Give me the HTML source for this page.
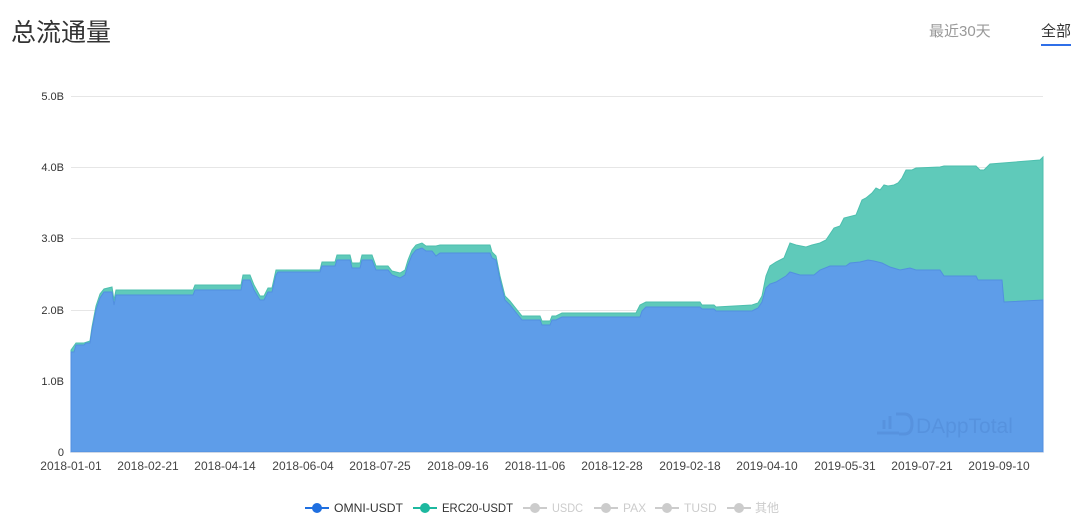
<!DOCTYPE html>
<html><head><meta charset="utf-8"><style>
body{margin:0;width:1080px;height:527px;background:#fff;overflow:hidden;font-family:"Liberation Sans","Noto Sans CJK SC",sans-serif;position:relative}
.t{position:absolute;left:11px;top:13px;font-size:25px;color:#333}
.tab{position:absolute;top:20px;font-size:15px}
</style></head><body>
<div class="t">总流通量</div>
<div class="tab" style="left:929px;color:#999">最近30天</div>
<div class="tab" style="left:1041px;color:#333">全部</div>
<div style="position:absolute;left:1041px;top:44px;width:30px;height:2px;background:#2f6fe8"></div>
<svg width="1080" height="527" style="position:absolute;left:0;top:0" font-family="Liberation Sans, sans-serif">
<g stroke="#e6e6e6" stroke-width="1">
<line x1="71" x2="1043" y1="96.5" y2="96.5"/><line x1="71" x2="1043" y1="167.5" y2="167.5"/>
<line x1="71" x2="1043" y1="238.5" y2="238.5"/><line x1="71" x2="1043" y1="310.5" y2="310.5"/>
<line x1="71" x2="1043" y1="381.5" y2="381.5"/>
</g>
<g font-size="11" fill="#333" text-anchor="end">
<text x="64" y="100">5.0B</text><text x="64" y="171">4.0B</text><text x="64" y="242">3.0B</text>
<text x="64" y="314">2.0B</text><text x="64" y="385">1.0B</text><text x="64" y="456">0</text>
</g>
<path fill="#5fcaba" stroke="#4dbfae" d="M71,452 L71,350 L76,343 L84,343 L90,341 L92,327 L96,306 L100,294 L104,289 L112,287 L114,300 L116,290 L193,290 L195,285 L241,285 L243,275 L250,275 L254,285 L260,296 L264,296 L268,288 L272,288 L276,270 L320,270 L322,262 L335,262 L337,255 L350,255 L352,263 L360,263 L362,255 L372,255 L376,266 L388,266 L392,271 L400,273 L405,270 L408,260 L412,250 L416,245 L422,243 L426,246 L432,246 L436,246 L440,245 L490,245 L492,252 L496,256 L500,276 L505,296 L510,301 L514,306 L518,311 L522,316 L540,316 L542,321 L550,321 L552,316 L556,316 L562,313 L636,313 L640,305 L646,302 L700,302 L702,305 L714,305 L716,307 L752,305 L758,303 L762,296 L764,286 L766,276 L770,266 L776,262 L784,258 L790,243 L796,245 L806,247 L812,245 L820,243 L826,240 L830,234 L834,228 L840,226 L844,218 L856,215 L862,200 L866,198 L872,193 L876,188 L880,190 L884,185 L888,186 L894,185 L898,183 L902,178 L906,170 L912,170 L916,168 L940,167 L944,166 L976,166 L980,170 L984,170 L990,164 L1040,160 L1043,157 L1043,452 Z"/>
<path fill="#5e9de9" stroke="#528fe0" d="M71,452 L71,352 L74,352 L76,345 L84,345 L86,343 L90,343 L92,330 L96,310 L100,298 L104,292 L112,292 L114,305 L116,295 L193,295 L195,290 L241,290 L243,280 L250,280 L254,290 L260,300 L264,300 L268,292 L272,292 L276,275 L278,272 L320,272 L322,266 L335,266 L337,260 L350,260 L352,268 L360,268 L362,260 L372,260 L376,270 L388,270 L392,275 L400,278 L405,275 L408,265 L412,255 L416,250 L422,248 L426,251 L432,251 L436,256 L440,253 L490,253 L492,258 L496,260 L500,280 L505,300 L510,305 L514,310 L518,315 L522,320 L540,320 L542,325 L550,325 L552,320 L556,320 L562,317 L640,317 L642,311 L646,307 L700,307 L702,309 L714,309 L716,311 L752,311 L758,308 L762,302 L766,288 L770,284 L776,282 L786,276 L790,272 L800,275 L814,275 L820,270 L830,266 L846,266 L850,263 L860,262 L868,260 L874,261 L882,263 L890,267 L900,270 L910,268 L916,270 L940,270 L944,276 L976,276 L978,280 L1002,280 L1004,302 L1043,300 L1043,452 Z"/>
<line x1="71" x2="1043" y1="452.5" y2="452.5" stroke="#cfd8e6"/>
<g fill="none" stroke="#4f88d4" stroke-width="3" opacity="0.5">
<path d="M877,433 L899,433 M884,420 L884,429 M890,416 L890,429 M896,414 L904,414 Q912,414 912,424 Q912,434 904,434 L899,434"/>
</g>
<text x="916" y="433" font-size="21" fill="#4f88d4" opacity="0.5">DAppTotal</text>
<g font-size="12" fill="#444" text-anchor="middle">
<text x="71" y="470">2018-01-01</text><text x="148" y="470">2018-02-21</text><text x="225" y="470">2018-04-14</text>
<text x="303" y="470">2018-06-04</text><text x="380" y="470">2018-07-25</text><text x="458" y="470">2018-09-16</text>
<text x="535" y="470">2018-11-06</text><text x="612" y="470">2018-12-28</text><text x="690" y="470">2019-02-18</text>
<text x="767" y="470">2019-04-10</text><text x="845" y="470">2019-05-31</text><text x="922" y="470">2019-07-21</text>
<text x="999" y="470">2019-09-10</text>
</g>
<g font-size="12">
<line x1="305" x2="329" y1="508" y2="508" stroke="#1f6fe0" stroke-width="2"/><circle cx="317" cy="508" r="5" fill="#1f6fe0"/>
<text x="334" y="512" fill="#333" textLength="69" lengthAdjust="spacingAndGlyphs">OMNI-USDT</text>
<line x1="413" x2="437" y1="508" y2="508" stroke="#1db89f" stroke-width="2"/><circle cx="425" cy="508" r="5" fill="#1db89f"/>
<text x="442" y="512" fill="#333" textLength="71" lengthAdjust="spacingAndGlyphs">ERC20-USDT</text>
<line x1="523" x2="547" y1="508" y2="508" stroke="#ccc" stroke-width="2"/><circle cx="535" cy="508" r="5" fill="#ccc"/>
<text x="552" y="512" fill="#ccc" textLength="31" lengthAdjust="spacingAndGlyphs">USDC</text>
<line x1="594" x2="618" y1="508" y2="508" stroke="#ccc" stroke-width="2"/><circle cx="606" cy="508" r="5" fill="#ccc"/>
<text x="623" y="512" fill="#ccc">PAX</text>
<line x1="655" x2="679" y1="508" y2="508" stroke="#ccc" stroke-width="2"/><circle cx="667" cy="508" r="5" fill="#ccc"/>
<text x="684" y="512" fill="#ccc">TUSD</text>
<line x1="727" x2="751" y1="508" y2="508" stroke="#ccc" stroke-width="2"/><circle cx="739" cy="508" r="5" fill="#ccc"/>
<text x="755" y="512" fill="#ccc" font-family="Liberation Sans, Noto Sans CJK SC, sans-serif">其他</text>
</g>
</svg>
</body></html>
